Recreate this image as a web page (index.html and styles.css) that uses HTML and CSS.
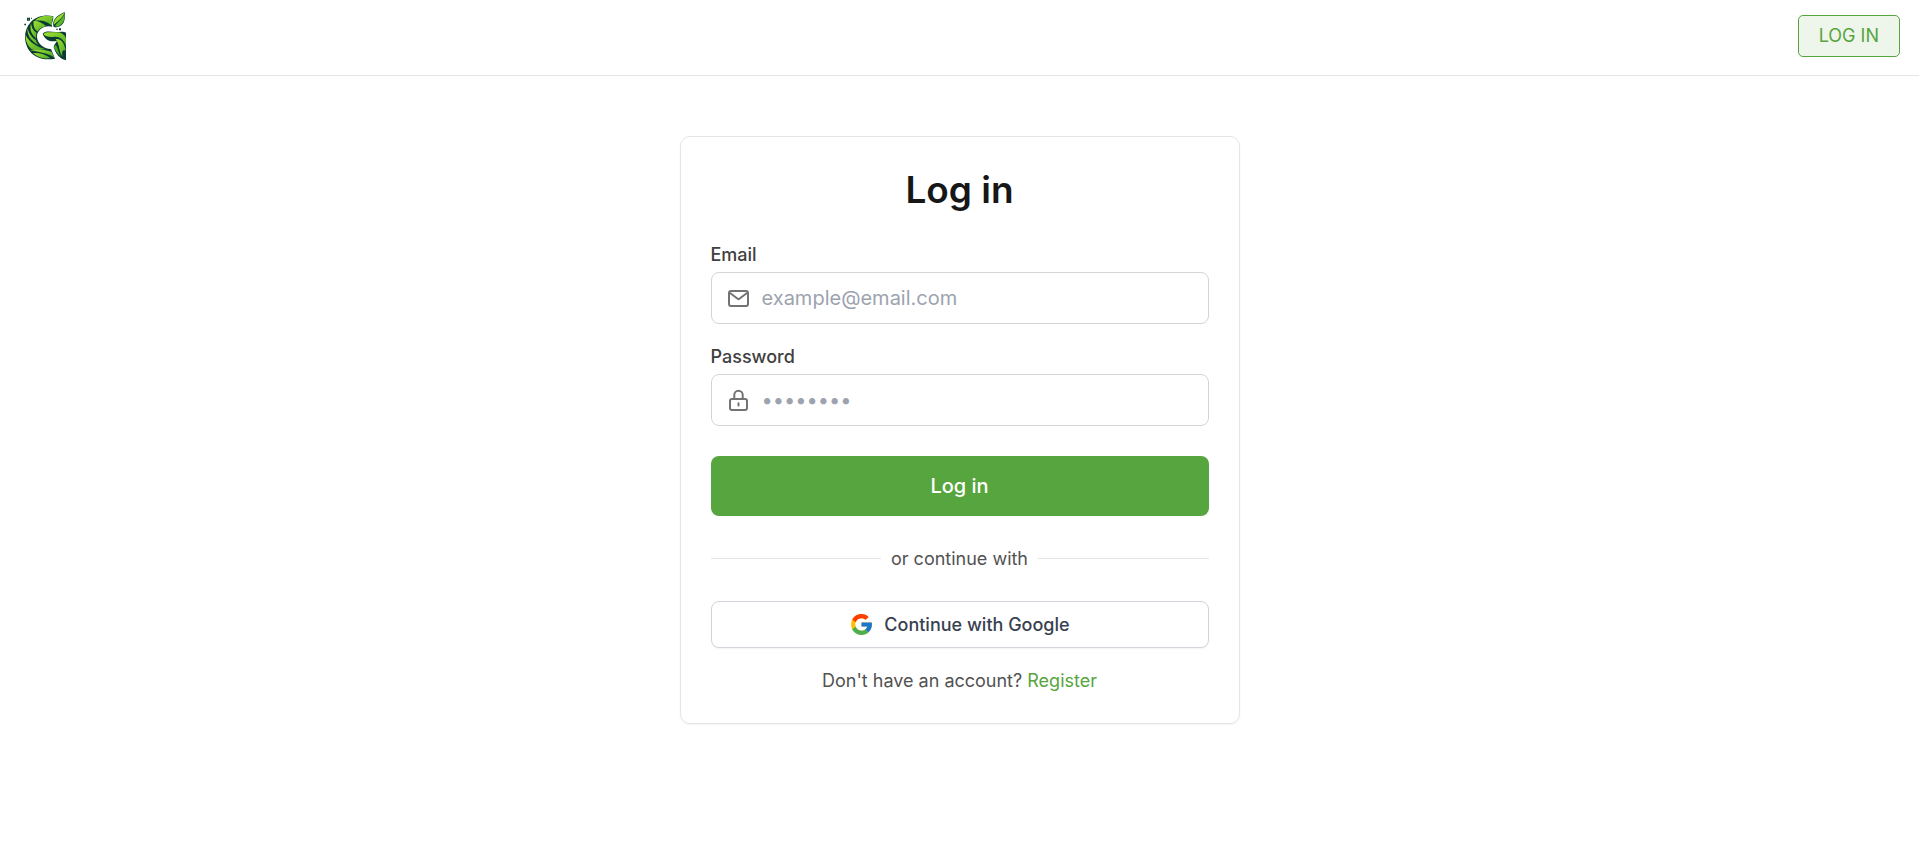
FILE: index.html
```html
<!DOCTYPE html>
<html lang="en">
<head>
    <meta charset="UTF-8">
    <meta name="viewport" content="width=device-width, initial-scale=1.0">
    <title>Log in</title>
    <link rel="stylesheet" href="styles.css">
</head>
<body>
    <header class="header">
        <a href="#" class="logo" aria-label="Home">
            <svg viewBox="72 34 126 150" aria-hidden="true">
                <defs>
                    <linearGradient id="leaf" x1="0" y1="0" x2="1" y2="1">
                        <stop offset="0" stop-color="#a4e032"/>
                        <stop offset="1" stop-color="#4cab27"/>
                    </linearGradient>
                </defs>
                <!-- ring -->
                <path fill="#0b3b33" d="M160 50C138 44 110 49 93 66C72 88 70 122 84 147C98 171 128 184 165 177L153 148C130 148 112 131 111 112C110 94 126 80 146 80C150 80 154 81 158 82Z"/>
                <!-- leaves on the ring -->
                <path fill="url(#leaf)" d="M160 51C140 45 118 50 104 63C125 60 145 66 156 79C155 68 156 60 160 51Z"/>
                <path fill="url(#leaf)" d="M101 64C99 80 104 90 113 95C118 87 126 82 138 79C124 68 113 63 101 64Z"/>
                <path fill="url(#leaf)" d="M93 71C88 91 95 105 109 117C108 111 108 105 110 100C99 93 94 83 93 71Z"/>
                <path fill="url(#leaf)" d="M83 86C80 104 91 124 116 137C111 130 109 127 108 122C93 112 86 100 83 86Z"/>
                <path fill="url(#leaf)" d="M77 106C76 122 82 137 93 147C107 153 124 147 138 149C111 142 88 128 77 106Z"/>
                <path fill="url(#leaf)" d="M90 152C109 146 130 149 154 156C158 163 161 169 163 174C145 161 119 157 90 152Z"/>
                <path fill="url(#leaf)" d="M99 160C118 159 138 165 151 175C130 179 113 173 99 160Z"/>
                <!-- leaf at the top, kept clear of the ring -->
                <path fill="#fff" d="M157 84C152 62 164 48 196 33L198 84Z"/>
                <path fill="#0b3b33" d="M160 80C157 60 168 49 194 37C197 61 192 79 170 83C166 84 162 82 160 80Z"/>
                <path fill="#93d62f" d="M162 75C160 60 171 50 193 39C190 53 177 60 162 75Z"/>
                <path fill="#5ab52a" d="M165 79C173 66 188 58 194 43C195 63 188 77 171 81Z"/>
                <!-- bar and stem -->
                <path fill="#0b3b33" d="M128 102C134 93 151 95 166 97C179 97 190 94 198 99V182C178 178 166 160 161 142C163 133 169 128 171 123C154 129 134 121 128 102Z"/>
                <path fill="url(#leaf)" d="M130 103C137 95 151 98 166 98C182 97 193 103 198 115V138C191 118 179 110 164 111C150 113 137 112 130 103Z"/>
                <path fill="url(#leaf)" d="M167 118C184 115 194 133 197 153C188 149 184 156 188 171C175 157 182 139 167 118Z"/>
                <path fill="#4cab27" d="M166 136C176 144 172 158 184 172C173 164 166 153 162 143Z"/>
                <!-- specks -->
                <path fill="#0b3b33" d="M81 54h9v9h-9zM73 72h5v5h-5zM93 54h3v3h-3zM177 86h6v6h-6zM169 87h4v4h-4z"/>
                <path fill="#5cb52b" d="M84 57h3v3h-3z"/>
            </svg>
        </a>
        <button type="button" class="header-button">LOG IN</button>
    </header>

    <main class="content">
        <form class="card">
            <h1>Log in</h1>

            <div class="field">
                <label for="email">Email</label>
                <div class="input-box">
                    <svg class="field-icon" viewBox="0 0 25 25" aria-hidden="true">
                        <rect x="3" y="5" width="19" height="15" rx="2"/>
                        <path d="M4 7l8 6q.5.3 1 0l8-6"/>
                    </svg>
                    <input type="email" id="email" placeholder="example@email.com">
                </div>
            </div>

            <div class="field">
                <label for="password">Password</label>
                <div class="input-box">
                    <svg class="field-icon" viewBox="0 0 25 25" aria-hidden="true">
                        <rect x="4" y="11" width="17" height="11" rx="2"/>
                        <path d="M8.300 11V7a4.200 4.200 0 0 1 8.400 0v4M12.500 15.200v2.200"/>
                    </svg>
                    <input type="password" id="password" placeholder="••••••••">
                </div>
            </div>

            <button type="submit" class="submit-button">Log in</button>

            <div class="divider">or continue with</div>

            <button type="button" class="google-button">
                <svg viewBox="0 0 48 48" aria-hidden="true">
                    <path fill="#FFC107" d="M43.611 20.083H42V20H24v8h11.303c-1.649 4.657-6.080 8-11.303 8-6.627 0-12-5.373-12-12s5.373-12 12-12c3.059 0 5.842 1.154 7.961 3.039l5.657-5.657C34.046 6.053 29.268 4 24 4 12.955 4 4 12.955 4 24s8.955 20 20 20 20-8.955 20-20c0-1.341-.138-2.650-.389-3.917z"/>
                    <path fill="#FF3D00" d="M6.306 14.691l6.571 4.819C14.655 15.108 18.961 12 24 12c3.059 0 5.842 1.154 7.961 3.039l5.657-5.657C34.046 6.053 29.268 4 24 4 16.318 4 9.656 8.337 6.306 14.691z"/>
                    <path fill="#4CAF50" d="M24 44c5.166 0 9.860-1.977 13.409-5.192l-6.190-5.238C29.211 35.091 26.715 36 24 36c-5.202 0-9.619-3.317-11.283-7.946l-6.522 5.025C9.505 39.556 16.227 44 24 44z"/>
                    <path fill="#1976D2" d="M43.611 20.083H42V20H24v8h11.303c-.792 2.237-2.231 4.166-4.087 5.571l6.193 5.238C36.971 39.205 44 34 44 24c0-1.341-.138-2.650-.389-3.917z"/>
                </svg>
                Continue with Google
            </button>

            <p class="register">Don't have an account? <a href="#">Register</a></p>
        </form>
    </main>
</body>
</html>
```
FILE: styles.css
```css
* {
    box-sizing: border-box;
}

body {
    margin: 0;
    font-family: Inter, sans-serif;
    font-size: 18px;
    line-height: 25px;
    color: #525252;
    background-color: #fff;
}

button,
input {
    font-family: inherit;
    font-size: inherit;
    line-height: inherit;
}

button {
    cursor: pointer;
}

.header {
    display: flex;
    align-items: center;
    justify-content: space-between;
    padding: 11px 19px 14px 24px;
    border-bottom: 1px solid #e5e5e5;
}

.logo svg {
    display: block;
    width: 42px;
    height: 50px;
}

.header-button {
    padding: 8px 20px;
    line-height: 24px;
    color: #57a53e;
    background-color: #eef5eb;
    border: 1px solid #57a53e;
    border-radius: 5px;
}

.content {
    display: flex;
    justify-content: center;
    padding: 60px 20px;
}

.card {
    width: 100%;
    max-width: 560px;
    padding: 30px;
    border: 1px solid #e5e5e5;
    border-radius: 10px;
    box-shadow: 0 1px 2px rgba(0, 0, 0, 0.05);
}

h1 {
    margin: 0 0 30px;
    font-size: 37px;
    line-height: 45px;
    font-weight: 600;
    text-align: center;
    color: #171717;
}

.field {
    margin-bottom: 20px;
}

.field label {
    display: block;
    margin-bottom: 5px;
    font-weight: 500;
    color: #404040;
}

.input-box {
    display: flex;
    align-items: center;
    gap: 11px;
    padding-left: 14px;
    border: 1px solid #d4d4d4;
    border-radius: 8px;
}

.input-box:focus-within {
    border-color: #57a53e;
}

.field-icon {
    flex: none;
    width: 25px;
    height: 25px;
    fill: none;
    stroke: #737373;
    stroke-width: 2;
    stroke-linecap: round;
    stroke-linejoin: round;
}

.input-box input {
    flex: 1;
    min-width: 0;
    height: 50px;
    padding: 0 10px 0 0;
    font-size: 20px;
    color: #171717;
    background: none;
    border: none;
    outline: none;
}

.input-box input::placeholder {
    color: #9ca3af;
}

.submit-button {
    width: 100%;
    margin-top: 10px;
    padding: 17px;
    font-size: 20px;
    line-height: 26px;
    font-weight: 500;
    color: #fff;
    background-color: #57a53e;
    border: none;
    border-radius: 8px;
}

.divider {
    display: flex;
    align-items: center;
    gap: 10px;
    margin: 30px 0;
}

.divider::before,
.divider::after {
    content: "";
    flex: 1;
    height: 1px;
    background-color: #e5e5e5;
}

.google-button {
    display: flex;
    align-items: center;
    justify-content: center;
    gap: 10px;
    width: 100%;
    padding: 10px;
    font-weight: 500;
    color: #374151;
    background-color: #fff;
    border: 1px solid #d1d5db;
    border-radius: 8px;
    box-shadow: 0 1px 2px rgba(0, 0, 0, 0.05);
}

.google-button svg {
    width: 25px;
    height: 25px;
}

.register {
    margin: 20px 0 0;
    text-align: center;
}

.register a {
    color: #57a53e;
    text-decoration: none;
}
```
